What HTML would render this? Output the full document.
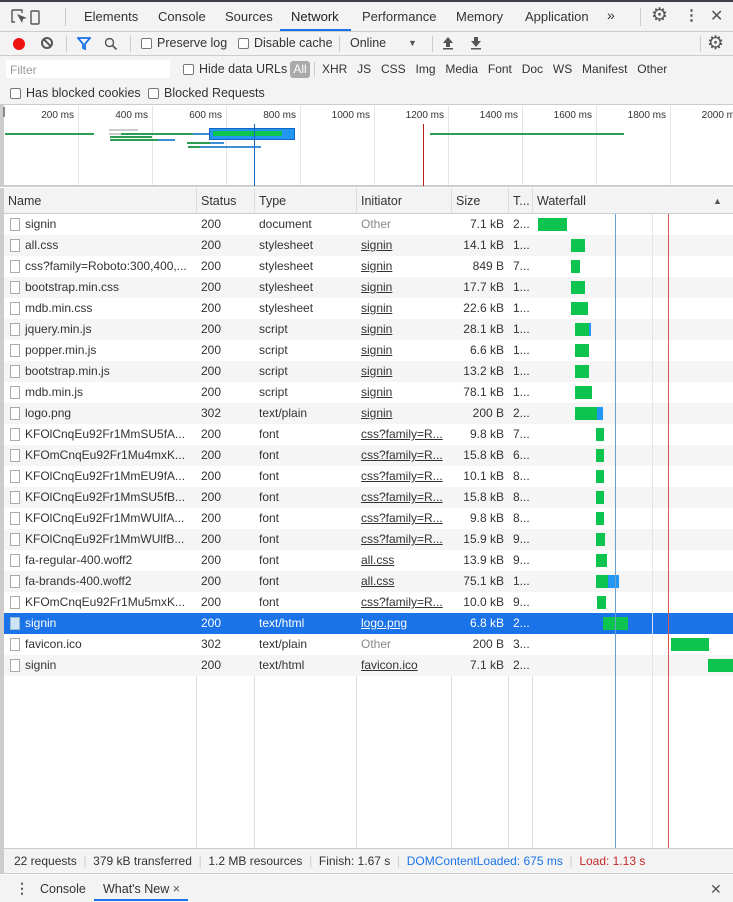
<!DOCTYPE html>
<html><head><meta charset="utf-8"><style>
*{box-sizing:border-box;margin:0;padding:0}
body{width:733px;height:902px;overflow:hidden;background:#fff;font-family:"Liberation Sans",sans-serif;font-size:12px;color:#333;position:relative}
.a{position:absolute}
.tb{background:#f3f3f3;border-bottom:1px solid #ccc}
.cb{display:inline-block;width:11px;height:11px;border:1px solid #777;border-radius:2px;background:#fff;vertical-align:-2px;margin-right:5px}
.row{position:absolute;left:4px;width:729px;height:21px;line-height:21px;white-space:nowrap}
.row span{position:absolute;top:0;overflow:hidden}
.u{text-decoration:underline}
.g{color:#888}
.bar{position:absolute;height:13px;top:4px;background:#0cc44e}
.ic{display:inline-block;width:10px;height:13px;border:1px solid #aaa;background:#fff;vertical-align:-3px;margin-right:5px}
</style></head><body>
<div class="a" style="left:0;top:0;width:733px;height:2px;background:#3c4049"></div>
<div class="a tb" style="left:0;top:2px;width:733px;height:30px"></div>
<svg class="a" style="left:11px;top:9px" width="30" height="16" viewBox="0 0 30 16"><path d="M1 1h10v3M1 1v12h3" stroke="#555" fill="none" stroke-width="1.4"/><path d="M6 5l5 9 1-4 4-1z" fill="#555"/><rect x="20" y="2" width="8" height="13" rx="1" stroke="#555" fill="none" stroke-width="1.4"/></svg>
<div class="a" style="left:65px;top:8px;width:1px;height:18px;background:#ccc"></div>
<div class="a" style="top:9px;left:84px;font-size:13px;color:#333">Elements</div>
<div class="a" style="top:9px;left:158px;font-size:13px">Console</div>
<div class="a" style="top:9px;left:225px;font-size:13px">Sources</div>
<div class="a" style="top:9px;left:291px;font-size:13px;color:#222">Network</div>
<div class="a" style="left:280px;top:29px;width:71px;height:2px;background:#1a73e8"></div>
<div class="a" style="top:9px;left:362px;font-size:13px">Performance</div>
<div class="a" style="top:9px;left:456px;font-size:13px">Memory</div>
<div class="a" style="top:9px;left:525px;font-size:13px">Application</div>
<div class="a" style="top:7px;left:607px;font-size:14px">»</div>
<div class="a" style="left:640px;top:8px;width:1px;height:18px;background:#ccc"></div>
<div class="a" style="top:4px;left:651px;font-size:19px;color:#555">⚙</div>
<div class="a" style="top:6px;left:684px;font-size:15px;color:#555;font-weight:bold">⋮</div>
<div class="a" style="top:6px;left:710px;font-size:16px;color:#555">✕</div>
<div class="a tb" style="left:0;top:32px;width:733px;height:24px"></div>
<div class="a" style="left:13px;top:38px;width:12px;height:12px;border-radius:50%;background:#e11"></div>
<div class="a" style="left:41px;top:37px;width:12px;height:12px;border-radius:50%;border:2px solid #555"></div>
<div class="a" style="left:43px;top:42px;width:9px;height:2px;background:#555;transform:rotate(45deg)"></div>
<div class="a" style="left:66px;top:36px;width:1px;height:16px;background:#ccc"></div>
<svg class="a" style="left:77px;top:37px" width="14" height="13"><path d="M1 1h12L8 7v5L6 11V7z" fill="none" stroke="#1a73e8" stroke-width="1.8"/></svg>
<svg class="a" style="left:104px;top:37px" width="14" height="14"><circle cx="5.5" cy="5.5" r="4" fill="none" stroke="#555" stroke-width="1.4"/><path d="M8.5 8.5l4 4" stroke="#555" stroke-width="1.6"/></svg>
<div class="a" style="left:130px;top:36px;width:1px;height:16px;background:#ccc"></div>
<div class="a" style="left:141px;top:36px;font-size:12.5px"><span class="cb"></span>Preserve log</div>
<div class="a" style="left:238px;top:36px;font-size:12.5px"><span class="cb"></span>Disable cache</div>
<div class="a" style="left:339px;top:36px;width:1px;height:16px;background:#ccc"></div>
<div class="a" style="left:350px;top:36px;font-size:12.5px">Online</div>
<div class="a" style="left:408px;top:38px;font-size:9px;color:#555">▼</div>
<div class="a" style="left:432px;top:36px;width:1px;height:16px;background:#ccc"></div>
<svg class="a" style="left:442px;top:36px" width="12" height="14"><path d="M6 1L1 7h3v4h4V7h3z" fill="#555"/><rect x="1" y="12" width="10" height="1.5" fill="#555"/></svg>
<svg class="a" style="left:470px;top:36px" width="12" height="14"><path d="M6 11L1 5h3V1h4v4h3z" fill="#555"/><rect x="1" y="12" width="10" height="1.5" fill="#555"/></svg>
<div class="a" style="left:700px;top:36px;width:1px;height:16px;background:#ccc"></div>
<div class="a" style="top:32px;left:707px;font-size:19px;color:#555">⚙</div>
<div class="a tb" style="left:0;top:56px;width:733px;height:49px"></div>
<div class="a" style="left:6px;top:60px;width:164px;height:18px;background:#fff;color:#999;padding:3px 4px;font-size:12px">Filter</div>
<div class="a" style="left:183px;top:62px;font-size:12.5px"><span class="cb"></span>Hide data URLs</div>
<div class="a" style="left:290px;top:61px;width:20px;height:17px;border-radius:3px;background:#aaa;color:#fff;font-size:12px;text-align:center;line-height:17px">All</div>
<div class="a" style="left:314px;top:62px;width:1px;height:15px;background:#ccc"></div>
<div class="a" style="left:322px;top:62px;font-size:12px;word-spacing:6.5px;white-space:nowrap">XHR JS CSS Img Media Font Doc WS Manifest Other</div>
<div class="a" style="left:10px;top:86px;font-size:12.5px"><span class="cb"></span>Has blocked cookies</div>
<div class="a" style="left:148px;top:86px;font-size:12.5px"><span class="cb"></span>Blocked Requests</div>
<div class="a" style="left:0;top:105px;width:733px;height:82px;background:#fff;border-left:4px solid #ccc;border-bottom:2px solid #ccc"></div>
<div class="a" style="left:3px;top:107px;width:2px;height:10px;background:#888"></div>
<div id="ov"></div>
<div class="a" style="left:5px;top:133px;width:89px;height:2px;background:#2b9e54"></div>
<div class="a" style="left:109px;top:129px;width:29px;height:2px;background:#ccc"></div>
<div class="a" style="left:109px;top:133px;width:12px;height:2px;background:#ccc"></div>
<div class="a" style="left:121px;top:133px;width:72px;height:2px;background:#2b9e54"></div>
<div class="a" style="left:193px;top:133px;width:17px;height:2px;background:#3d8fd3"></div>
<div class="a" style="left:110px;top:136px;width:42px;height:2px;background:#2b9e54"></div>
<div class="a" style="left:110px;top:139px;width:48px;height:2px;background:#2b9e54"></div>
<div class="a" style="left:158px;top:139px;width:17px;height:2px;background:#3d8fd3"></div>
<div class="a" style="left:187px;top:142px;width:23px;height:2px;background:#2b9e54"></div>
<div class="a" style="left:210px;top:142px;width:14px;height:2px;background:#3d8fd3"></div>
<div class="a" style="left:188px;top:146px;width:12px;height:2px;background:#2b9e54"></div>
<div class="a" style="left:200px;top:146px;width:61px;height:2px;background:#3d8fd3"></div>
<div class="a" style="left:209px;top:128px;width:86px;height:12px;background:#2196f3;border:1px solid #1565c0"></div>
<div class="a" style="left:213px;top:131px;width:69px;height:5px;background:#0cc44e"></div>
<div class="a" style="left:430px;top:133px;width:194px;height:2px;background:#2b9e54"></div>
<div class="a" style="left:254px;top:124px;width:1px;height:62px;background:#1565c0"></div>
<div class="a" style="left:423px;top:124px;width:1px;height:62px;background:#b71c1c"></div>
<div class="a" style="left:4px;top:188px;width:729px;height:26px;background:#f3f3f3;border-bottom:1px solid #ccc"></div>
<div class="a" style="left:0;top:188px;width:4px;height:660px;background:#ccc"></div>
<div id="cols"></div>
<div class="a" style="left:8px;top:194px;font-size:12.5px">Name</div>
<div class="a" style="left:201px;top:194px;font-size:12.5px">Status</div>
<div class="a" style="left:259px;top:194px;font-size:12.5px">Type</div>
<div class="a" style="left:361px;top:194px;font-size:12.5px">Initiator</div>
<div class="a" style="left:456px;top:194px;font-size:12.5px">Size</div>
<div class="a" style="left:513px;top:194px;font-size:12.5px">T...</div>
<div class="a" style="left:537px;top:194px;font-size:12.5px">Waterfall</div>
<div class="a" style="left:713px;top:196px;font-size:9px;color:#555">▲</div>
<div id="rows"></div>
<div class="a" style="left:0;top:848px;width:733px;height:26px;background:#f3f3f3;border-top:1px solid #ccc;border-bottom:1px solid #ccc;border-left:4px solid #ccc"></div>
<div class="a" style="left:14px;top:854px;font-size:12px;white-space:nowrap">22 requests <span style="color:#ccc">&nbsp;|&nbsp;</span> 379 kB transferred <span style="color:#ccc">&nbsp;|&nbsp;</span> 1.2 MB resources <span style="color:#ccc">&nbsp;|&nbsp;</span> Finish: 1.67 s <span style="color:#ccc">&nbsp;|&nbsp;</span> <span style="color:#1a73e8">DOMContentLoaded: 675 ms</span> <span style="color:#ccc">&nbsp;|&nbsp;</span> <span style="color:#c62828">Load: 1.13 s</span></div>
<div class="a" style="left:0;top:875px;width:733px;height:27px;background:#f3f3f3"></div>
<div class="a" style="left:15px;top:880px;font-size:14px;color:#555;font-weight:bold">⋮</div>
<div class="a" style="left:40px;top:882px;font-size:12.5px">Console</div>
<div class="a" style="left:103px;top:882px;font-size:12.5px">What's New <span style="color:#555">×</span></div>
<div class="a" style="left:94px;top:899px;width:94px;height:2px;background:#1a73e8"></div>
<div class="a" style="left:710px;top:881px;font-size:14px;color:#555">✕</div>
<script>
var ov='';var ls=['200 ms','400 ms','600 ms','800 ms','1000 ms','1200 ms','1400 ms','1600 ms','1800 ms','2000 ms'];
for(var i=0;i<10;i++){var x=78+74*i;ov+='<div class="a" style="left:'+x+'px;top:106px;width:1px;height:79px;background:#e5e5e5"></div><div class="a" style="left:'+(x-70)+'px;top:110px;width:66px;text-align:right;font-size:10px;color:#333;white-space:nowrap">'+ls[i]+'</div>';}
document.getElementById('ov').innerHTML=ov;
var c='';[196,254,356,451,508,532].forEach(function(x){c+='<div class="a" style="left:'+x+'px;top:188px;width:1px;height:660px;background:#ddd"></div>'});
document.getElementById('cols').innerHTML=c;
var R=[
['signin','200','document','Other','7.1 kB','2...',538,29,0],
['all.css','200','stylesheet','signin','14.1 kB','1...',571,14,0],
['css?family=Roboto:300,400,...','200','stylesheet','signin','849 B','7...',571,9,0],
['bootstrap.min.css','200','stylesheet','signin','17.7 kB','1...',571,14,0],
['mdb.min.css','200','stylesheet','signin','22.6 kB','1...',571,17,0],
['jquery.min.js','200','script','signin','28.1 kB','1...',575,14,2],
['popper.min.js','200','script','signin','6.6 kB','1...',575,14,0],
['bootstrap.min.js','200','script','signin','13.2 kB','1...',575,14,0],
['mdb.min.js','200','script','signin','78.1 kB','1...',575,17,0],
['logo.png','302','text/plain','signin','200 B','2...',575,22,6],
['KFOlCnqEu92Fr1MmSU5fA...','200','font','css?family=R...','9.8 kB','7...',596,8,0],
['KFOmCnqEu92Fr1Mu4mxK...','200','font','css?family=R...','15.8 kB','6...',596,8,0],
['KFOlCnqEu92Fr1MmEU9fA...','200','font','css?family=R...','10.1 kB','8...',596,8,0],
['KFOlCnqEu92Fr1MmSU5fB...','200','font','css?family=R...','15.8 kB','8...',596,8,0],
['KFOlCnqEu92Fr1MmWUlfA...','200','font','css?family=R...','9.8 kB','8...',596,8,0],
['KFOlCnqEu92Fr1MmWUlfB...','200','font','css?family=R...','15.9 kB','9...',596,9,0],
['fa-regular-400.woff2','200','font','all.css','13.9 kB','9...',596,11,0],
['fa-brands-400.woff2','200','font','all.css','75.1 kB','1...',596,12,11],
['KFOmCnqEu92Fr1Mu5mxK...','200','font','css?family=R...','10.0 kB','9...',597,9,0],
['signin','200','text/html','logo.png','6.8 kB','2...',603,25,0],
['favicon.ico','302','text/plain','Other','200 B','3...',671,38,0],
['signin','200','text/html','favicon.ico','7.1 kB','2...',708,25,0]];
var h='';
R.forEach(function(r,i){var y=214+21*i;var sel=i==19;var bg=sel?'#1a73e8':(i%2?'#f5f5f5':'#fff');var col=sel?'#fff':'#333';
var ini=r[3]=='Other'?'<span class="g" style="left:357px">Other</span>':'<span class="u" style="left:357px;width:85px">'+r[3]+'</span>';
h+='<div class="row" style="top:'+y+'px;background:'+bg+';color:'+col+'">'+
'<span style="left:6px;width:186px"><i class="ic" style="'+(sel?'background:#cfe3f7;border-color:#9bc':'')+'"></i>'+r[0]+'</span>'+
'<span style="left:197px">'+r[1]+'</span><span style="left:255px">'+r[2]+'</span>'+ini+
'<span style="left:447px;width:53px;text-align:right">'+r[4]+'</span><span style="left:509px">'+r[5]+'</span></div>';
var bx=r[6],bw=r[7];
h+='<div class="bar" style="left:'+bx+'px;width:'+bw+'px;top:'+(y+4)+'px"></div>';
if(r[8]>0)h+='<div class="bar" style="left:'+(bx+bw)+'px;width:'+r[8]+'px;top:'+(y+4)+'px;background:#2196f3"></div>';
});
h+='<div class="a" style="left:652px;top:214px;width:1px;height:634px;background:#e5e5e5"></div>';
h+='<div class="a" style="left:615px;top:214px;width:1px;height:634px;background:#6a9fd4"></div>';
h+='<div class="a" style="left:668px;top:214px;width:1px;height:634px;background:#d9534f"></div>';
document.getElementById('rows').innerHTML=h;
</script>
</body></html>
